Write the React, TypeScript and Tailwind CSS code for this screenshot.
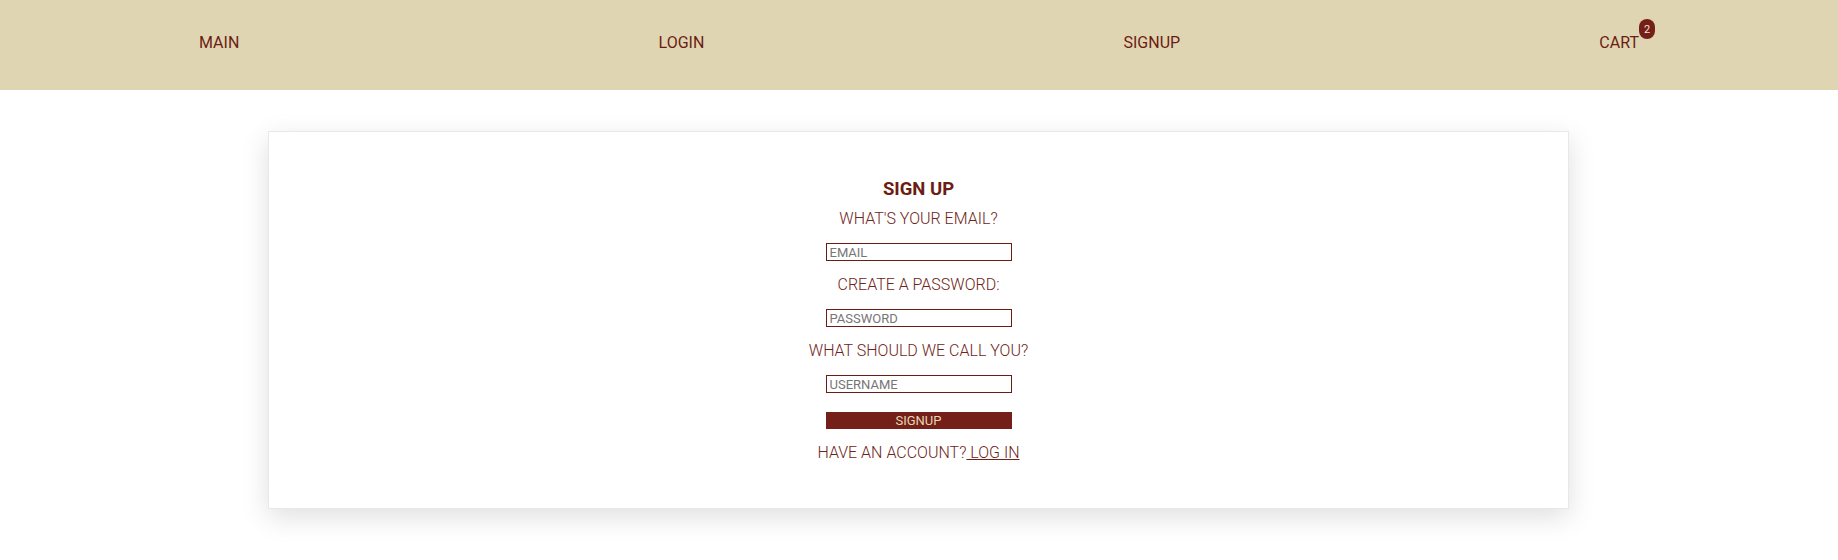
import React from 'react';

const navItems = ['MAIN', 'LOGIN', 'SIGNUP'];

const Field: React.FC<{ label: string; placeholder: string; type?: string }> = ({ label, placeholder, type = 'text' }) => (
  <>
    <label className="text-[16px] leading-6 font-light text-[#6e2418]">{label}</label>
    <input
      type={type}
      placeholder={placeholder}
      className="mt-[12px] mb-[12px] h-[18px] w-[186px] border border-[#6b1d14] bg-white px-[3px] text-[13px] leading-none text-[#333] placeholder:text-[#767676] outline-none"
    />
  </>
);

export default function App() {
  return (
    <div className="min-h-[560px] bg-white font-['Roboto',sans-serif]">
      <nav className="h-[90px] bg-[#e0d5b3] flex justify-between items-start pt-[31px] px-[199px]">
        {navItems.map((item) => (
          <a key={item} className="text-[16px] leading-6 text-[#6b1d12] cursor-pointer">
            {item}
          </a>
        ))}
        <a className="relative text-[16px] leading-6 text-[#6b1d12] cursor-pointer">
          CART
          <span className="absolute -top-[12px] left-full w-4 h-5 rounded-full bg-[#741f17] text-[11px] leading-none text-[#f0e6cf] flex items-center justify-center">
            2
          </span>
        </a>
      </nav>

      <div className="pt-[41px]">
        <div className="w-[1301px] ml-[268px] bg-white border border-[#e8e8e8] shadow-[0_8px_26px_rgba(0,0,0,0.13)] pt-[45px] pb-[43px] flex flex-col items-center">
          <h2 className="text-[18.5px] leading-6 font-bold text-[#6b1d12]">SIGN UP</h2>
          <div className="mt-[6px] flex flex-col items-center">
            <Field label="WHAT'S YOUR EMAIL?" placeholder="EMAIL" type="email" />
            <Field label="CREATE A PASSWORD:" placeholder="PASSWORD" type="password" />
            <Field label="WHAT SHOULD WE CALL YOU?" placeholder="USERNAME" />
            <button className="mt-[7px] h-[17px] w-[186px] bg-[#741f17] text-[13px] leading-none text-[#e6d6b6]">
              SIGNUP
            </button>
            <p className="mt-[12px] text-[16px] leading-6 font-light text-[#6e2418]">
              HAVE AN ACCOUNT?<a className="underline cursor-pointer"> LOG IN</a>
            </p>
          </div>
        </div>
      </div>
    </div>
  );
}
